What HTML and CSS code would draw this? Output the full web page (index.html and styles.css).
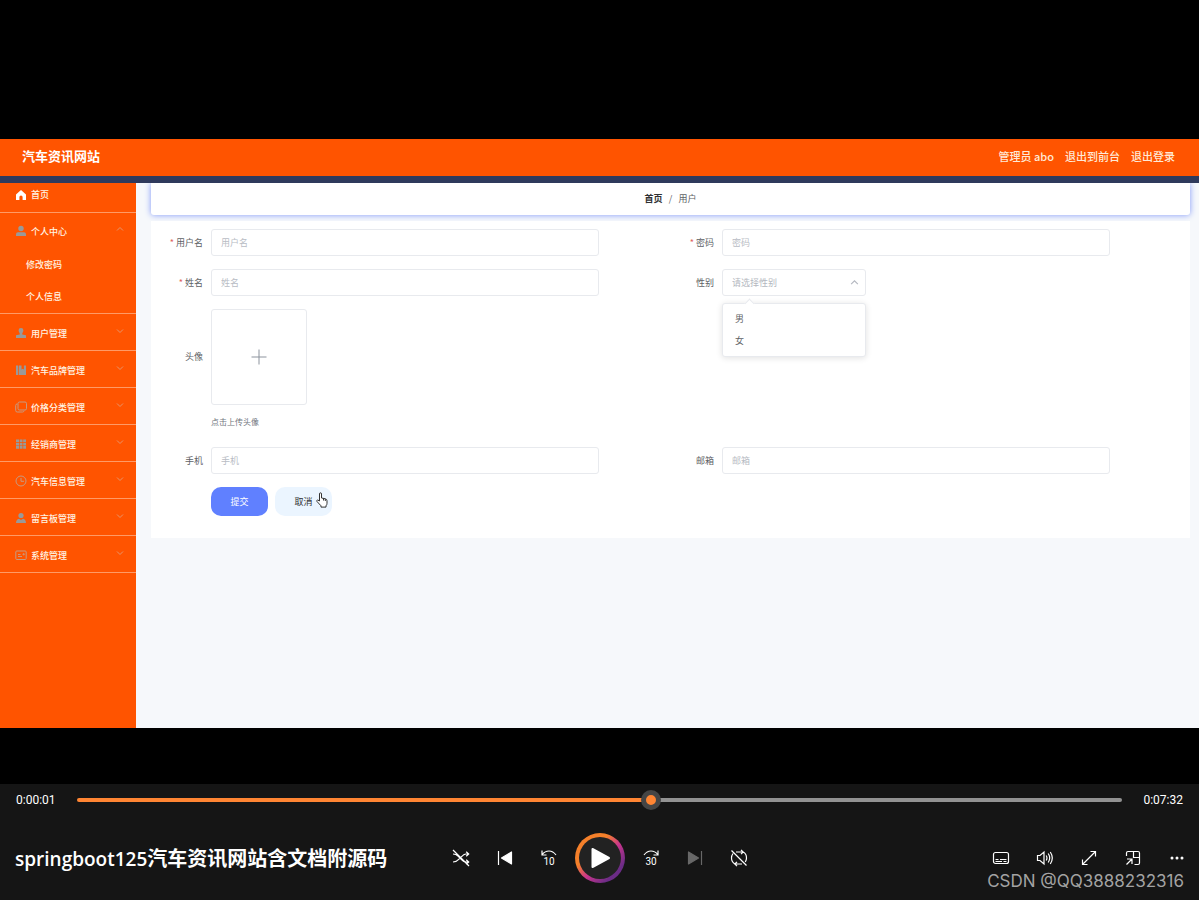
FILE: index.html
```html
<!DOCTYPE html>
<html lang="zh-CN">
<head>
<meta charset="utf-8">
<meta name="viewport" content="width=device-width, initial-scale=1">
<title>springboot125汽车资讯网站含文档附源码</title>
<link rel="stylesheet" href="styles.css">
</head>
<body>
<div class="stage">
  <div class="app">
    <header class="app-header">
      <h1 class="app-title">汽车资讯网站</h1>
      <nav class="app-user">
        <span>管理员 abo</span>
        <a href="#front">退出到前台</a>
        <a href="#logout">退出登录</a>
      </nav>
    </header>
    <div class="app-body">
      <nav class="sidebar">
        <a class="menu-item menu-home" href="#home">
          <svg class="menu-icon" viewBox="0 0 12 12"><path fill="#fff" d="M6 1 1 5.600V11h3.400V8a1.600 1.600 0 0 1 3.200 0v3H11V5.600z"/></svg>
          <span>首页</span>
        </a>
        <div class="menu-group">
          <a class="menu-item menu-open" href="#me">
            <svg class="menu-icon" viewBox="0 0 12 12"><circle cx="6" cy="3.500" r="2.700" fill="#999"/><path fill="#999" d="M1 11V9.200Q1 7.200 3 7.200h6q2 0 2 2V11z"/></svg>
            <span>个人中心</span>
            <svg class="menu-arrow" viewBox="0 0 8 8"><path d="M1 5.500 4 2.500l3 3"/></svg>
          </a>
          <a class="menu-sub" href="#password">修改密码</a>
          <a class="menu-sub" href="#profile">个人信息</a>
        </div>
        <a class="menu-item" href="#users">
          <svg class="menu-icon" viewBox="0 0 12 12"><path fill="#999" d="M6 1q2.400 0 2.400 2.300 0 1.700-1.100 2.900v1.200l3.700.9V11H1V8.300l3.700-.9V6.200Q3.600 5 3.600 3.300 3.600 1 6 1z"/></svg>
          <span>用户管理</span>
          <svg class="menu-arrow" viewBox="0 0 8 8"><path d="M1 2.500l3 3 3-3"/></svg>
        </a>
        <a class="menu-item" href="#brands">
          <svg class="menu-icon" viewBox="0 0 12 12"><path fill="#999" d="M1 1.500h2v9.500H1zM3.700 1.500h2.800v4l1.200-.8 1.200.8v-4H11V11H3.700z"/></svg>
          <span>汽车品牌管理</span>
          <svg class="menu-arrow" viewBox="0 0 8 8"><path d="M1 2.500l3 3 3-3"/></svg>
        </a>
        <a class="menu-item" href="#prices">
          <svg class="menu-icon menu-line" viewBox="0 0 12 12"><rect x="3" y="1" width="8.500" height="8" rx="1.500"/><path d="M2.500 3H2Q.7 3 .7 4.500V9.500Q.7 11 2.200 11H7.500Q9 11 9 9.700"/></svg>
          <span>价格分类管理</span>
          <svg class="menu-arrow" viewBox="0 0 8 8"><path d="M1 2.500l3 3 3-3"/></svg>
        </a>
        <a class="menu-item" href="#dealers">
          <svg class="menu-icon" viewBox="0 0 12 12"><path fill="#999" d="M1 1.500h3v2.600H1zM4.700 1.500h2.800v2.600H4.700zM8.200 1.500H11v2.600H8.200zM1 4.800h3v2.600H1zM4.700 4.800h2.800v2.600H4.700zM8.200 4.800H11v2.600H8.200zM1 8.100h3v2.600H1zM4.700 8.100h2.800v2.600H4.700zM8.200 8.100H11v2.600H8.200z"/></svg>
          <span>经销商管理</span>
          <svg class="menu-arrow" viewBox="0 0 8 8"><path d="M1 2.500l3 3 3-3"/></svg>
        </a>
        <a class="menu-item" href="#cars">
          <svg class="menu-icon menu-line" viewBox="0 0 12 12"><circle cx="6" cy="6" r="5"/><path d="M6 3v3.300h3"/></svg>
          <span>汽车信息管理</span>
          <svg class="menu-arrow" viewBox="0 0 8 8"><path d="M1 2.500l3 3 3-3"/></svg>
        </a>
        <a class="menu-item" href="#messages">
          <svg class="menu-icon" viewBox="0 0 12 12"><circle cx="6" cy="3.500" r="2.600" fill="#999"/><path fill="#999" d="M1 11Q1 7.500 4 6.800L6 8l2-1.200Q11 7.500 11 11z"/></svg>
          <span>留言板管理</span>
          <svg class="menu-arrow" viewBox="0 0 8 8"><path d="M1 2.500l3 3 3-3"/></svg>
        </a>
        <a class="menu-item" href="#system">
          <svg class="menu-icon menu-line" viewBox="0 0 12 12"><rect x=".8" y="2" width="10.400" height="8.500" rx="1"/><path d="M3 5.500h2.500M3 7.500h4M8 4.800h1.200v1H8z"/></svg>
          <span>系统管理</span>
          <svg class="menu-arrow" viewBox="0 0 8 8"><path d="M1 2.500l3 3 3-3"/></svg>
        </a>
      </nav>
      <main class="content">
        <div class="breadcrumb">
          <a class="crumb-home" href="#home">首页</a><span class="crumb-sep">/</span><span>用户</span>
        </div>
        <form class="form-card">
          <div class="field">
            <label class="required" for="username">用户名</label>
            <input class="text-box" id="username" type="text" placeholder="用户名">
          </div>
          <div class="field">
            <label class="required" for="password">密码</label>
            <input class="text-box" id="password" type="password" placeholder="密码">
          </div>
          <div class="field">
            <label class="required" for="fullname">姓名</label>
            <input class="text-box" id="fullname" type="text" placeholder="姓名">
          </div>
          <div class="field">
            <label for="gender">性别</label>
            <div class="select-wrap">
              <select class="text-box" id="gender">
                <option>请选择性别</option>
                <option>男</option>
                <option>女</option>
              </select>
              <svg class="select-arrow" viewBox="0 0 8 8"><path d="M1 5.500 4 2.500l3 3"/></svg>
              <ul class="select-menu">
                <li>男</li>
                <li>女</li>
              </ul>
            </div>
          </div>
          <div class="field field-wide">
            <label class="upload-label" for="avatar">头像</label>
            <div class="upload">
              <button class="upload-box" id="avatar" type="button" aria-label="上传头像">
                <svg class="upload-plus" viewBox="0 0 16 16"><path d="M8 .5v15M.5 8h15"/></svg>
              </button>
              <p class="upload-tip">点击上传头像</p>
            </div>
          </div>
          <div class="field">
            <label for="phone">手机</label>
            <input class="text-box" id="phone" type="tel" placeholder="手机">
          </div>
          <div class="field">
            <label for="email">邮箱</label>
            <input class="text-box" id="email" type="email" placeholder="邮箱">
          </div>
          <div class="actions">
            <button class="btn btn-submit" type="button">提交</button>
            <button class="btn btn-cancel" type="button">取消
              <svg class="pointer" viewBox="0 0 12 16"><path d="M3.500 9V2q0-1.200 1-1.200t1 1.200v4l4 .8q1.500.4 1.500 2v2.500q0 1.500-1 2.500v1.300H5v-1.300L1 9.500q-.4-1.200.5-1.600z"/><path d="M7.500 6.500v2M9.300 7v2"/></svg>
            </button>
          </div>
        </form>
      </main>
    </div>
  </div>
</div>
<footer class="player">
  <div class="seek">
    <span class="time">0:00:01</span>
    <input class="seek-bar" type="range" min="0" max="100" value="55" aria-label="播放进度">
    <span class="time time-end">0:07:32</span>
  </div>
  <div class="controls">
    <div class="media-title"><span class="media-latin">springboot125</span>汽车资讯网站含文档附源码</div>
    <div class="transport">
      <button class="ctl" type="button" aria-label="随机播放"><svg viewBox="0 0 18 18"><path d="M1 5q3 0 5 2.200L8.500 9.500q3 3.500 5.500 3.500h2.500M1 13q3.500 0 6-2.800l2-2Q12 5 14 5h2.500M14.200 2.700 16.700 5l-2.500 2.300M14.200 10.700l2.500 2.300-2.500 2.300M1 1l16 16"/></svg></button>
      <button class="ctl" type="button" aria-label="上一个"><svg viewBox="0 0 18 18"><path d="M2.500 2v14"/><path class="solid" d="M15.500 3v12L5.500 9z"/></svg></button>
      <button class="ctl" type="button" aria-label="后退10秒"><svg viewBox="0 0 18 18"><path d="M2 1.500v4.500h4.500M2.300 5.500Q5 2 9 2t7 4"/><text x="9" y="16">10</text></svg></button>
      <button class="play" type="button" aria-label="播放"><svg viewBox="0 0 24 24"><path d="M4.500 3v18L21 12z"/></svg></button>
      <button class="ctl" type="button" aria-label="前进30秒"><svg viewBox="0 0 18 18"><path d="M16 1.500v4.500h-4.500M15.700 5.500Q13 2 9 2T2 6"/><text x="9" y="16">30</text></svg></button>
      <button class="ctl ctl-off" type="button" aria-label="下一个"><svg viewBox="0 0 18 18"><path d="M15.500 2v14"/><path class="solid" d="M2.500 3v12l10-6z"/></svg></button>
      <button class="ctl" type="button" aria-label="重复播放"><svg viewBox="0 0 18 18"><path d="M6 3h7q3.500 1.500 3.500 6 0 2-1.200 4M12 15H5Q1.500 13 1.500 9q0-2.500 1.500-4.500M11 .8 13.200 3 11 5.200M7 12.800 4.800 15 7 17.200M1.500 1.500l15 15"/></svg></button>
    </div>
    <div class="tools">
      <button class="ctl" type="button" aria-label="字幕"><svg viewBox="0 0 18 18"><rect x="1.500" y="3.500" width="15" height="11" rx="2"/><path d="M3.500 10.500h3M8 10.500h6.500M3.500 12.500h6.500M11.500 12.500h3"/></svg></button>
      <button class="ctl" type="button" aria-label="音量"><svg viewBox="0 0 18 18"><path d="M1.500 6.500v5H4l4 3.500V3L4 6.500zM10.200 6.500q1.500 2.500 0 5M12.200 4.500q3 4.500 0 9M14.300 3q4 6 0 12"/></svg></button>
      <button class="ctl" type="button" aria-label="全屏"><svg viewBox="0 0 18 18"><path d="M2.500 15.500l13-13M10.500 2.500h5v5M2.500 10.500v5h5"/></svg></button>
      <button class="ctl" type="button" aria-label="小窗播放"><svg viewBox="0 0 18 18"><path d="M2.500 7V4q0-1.500 1.500-1.500h10q1.500 0 1.500 1.500v10q0 1.500-1.500 1.500h-3.500M9.500 2.500v6h6M2.500 15.500l5.500-5.500M3 10h5v5"/></svg></button>
      <button class="ctl" type="button" aria-label="更多"><svg viewBox="0 0 18 18"><circle class="solid" cx="4" cy="9" r=".9"/><circle class="solid" cx="9" cy="9" r=".9"/><circle class="solid" cx="14" cy="9" r=".9"/></svg></button>
    </div>
  </div>
  <div class="watermark">CSDN @QQ3888232316</div>
</footer>
</body>
</html>
```
FILE: styles.css
```css
* { box-sizing: border-box; }

body {
  margin: 0;
  min-height: 100vh;
  display: flex;
  flex-direction: column;
  background: #000;
  color: #606266;
  font: 9px/12px "Noto Sans CJK SC", sans-serif;
}

a { color: inherit; text-decoration: none; }
button, input, select { font: inherit; }
button { padding: 0; border: 0; cursor: pointer; }

.stage {
  flex: 1;
  display: flex;
  padding: 139px 0 56px;
}

.app { flex: 1; display: flex; flex-direction: column; }

.app-header {
  display: flex;
  align-items: center;
  justify-content: space-between;
  height: 44px;
  padding: 0 24px 3px 22px;
  border-bottom: 7px solid #2f3a5c;
  background: #ff5400;
  color: #fff;
}

.app-title { margin: 0; font-size: 13px; line-height: 20px; font-weight: 700; }

.app-user {
  display: flex;
  gap: 11px;
  color: #ffe9d6;
  font-size: 11px;
  font-weight: 500;
}

.app-body { flex: 1; display: flex; }

.sidebar {
  width: 136px;
  background: #ff5400;
  color: #fff4e4;
  font-weight: 500;
}

.menu-item {
  display: flex;
  align-items: center;
  gap: 4px;
  height: 37px;
  padding: 3px 12px 0 15px;
  border-bottom: 1px solid #ff9a66;
}

.menu-home { height: 30px; padding: 0 12px 5px 15px; }
.menu-group { border-bottom: 1px solid #ff9a66; }
.menu-open { height: 36px; padding-top: 1px; border-bottom: 0; }
.menu-sub { display: block; padding-left: 26px; line-height: 32px; }

.menu-icon { width: 12px; height: 12px; margin-bottom: 1px; }
.menu-line { fill: none; stroke: #c79a80; stroke-width: 1; }

.menu-arrow {
  width: 8px;
  height: 8px;
  margin: 0 0 5px auto;
  fill: none;
  stroke: #e8946a;
  stroke-width: 1;
}

.content {
  flex: 1;
  overflow: hidden;
  padding: 0 9px 0 15px;
  background: #f6f8fb;
}

.breadcrumb {
  display: flex;
  align-items: center;
  justify-content: center;
  gap: 6px;
  height: 32px;
  margin-bottom: 6px;
  border-radius: 0 0 3px 3px;
  background: #fff;
  box-shadow: 0 0 6px #7f97f8;
}

.crumb-home { color: #303133; font-weight: 700; }
.crumb-sep { width: 4px; text-align: center; }

.form-card {
  display: grid;
  grid-template-columns: 1fr 1fr;
  row-gap: 13px;
  padding: 8px 9px 22px 8px;
  background: #fff;
}

.field {
  display: grid;
  grid-template-columns: 52px 1fr;
  align-items: center;
  padding-right: 71px;
}

.field-wide { grid-column: 1 / -1; align-items: start; }
.field label { padding-right: 8px; text-align: right; white-space: nowrap; }
.required::before { content: "* "; color: #e0645c; }

.text-box {
  width: 100%;
  height: 27px;
  padding: 0 9px;
  border: 1px solid #e8eaee;
  border-radius: 3px;
  background: #fff;
  color: #b4b8c0;
  outline: 0;
}

.text-box::placeholder { color: #b8bcc4; }

.select-wrap { position: relative; width: 144px; }
select.text-box { display: block; appearance: none; }

.select-arrow {
  position: absolute;
  top: 9px;
  right: 7px;
  width: 9px;
  height: 9px;
  fill: none;
  stroke: #b4b8c0;
  stroke-width: 1;
}

.select-menu {
  position: absolute;
  top: 34px;
  left: 0;
  width: 100%;
  margin: 0;
  padding: 4px 0;
  border: 1px solid #e8eaee;
  border-radius: 3px;
  background: #fff;
  box-shadow: 0 1px 6px rgba(0, 0, 0, 0.12);
  list-style: none;
}

.select-menu::before {
  content: "";
  position: absolute;
  top: -4px;
  left: 23px;
  width: 6px;
  height: 6px;
  border: solid #e8eaee;
  border-width: 1px 0 0 1px;
  background: #fff;
  transform: rotate(45deg);
}

.select-menu li { padding-left: 12px; line-height: 22px; }

.upload-label { line-height: 96px; }

.upload-box {
  display: grid;
  place-items: center;
  width: 96px;
  height: 96px;
  border: 1px solid #e8eaee;
  border-radius: 3px;
  background: #fff;
}

.upload-plus { width: 16px; height: 16px; stroke: #8c939d; stroke-width: 1; }
.upload-tip { margin: 0; padding: 11px 0 6px; font-size: 8px; color: #70757d; }

.actions {
  grid-column: 1 / -1;
  display: flex;
  gap: 7px;
  padding-left: 52px;
}

.btn { width: 57px; height: 29px; border-radius: 10px; }
.btn-submit { background: #6080ff; color: #fff; }
.btn-cancel { position: relative; background: #ebf5ff; color: #303133; }

.pointer {
  position: absolute;
  top: 5px;
  right: 4px;
  width: 12px;
  height: 16px;
  fill: #fff;
  stroke: #333;
  stroke-width: 1;
}

.player {
  position: relative;
  background: #151515;
  color: #fff;
}

.seek {
  display: grid;
  grid-template-columns: 61px 1fr 61px;
  align-items: center;
  height: 32px;
  padding: 0 16px;
}

.time { font: 12px/16px Roboto, sans-serif; }
.time-end { text-align: right; }

.seek-bar {
  width: 100%;
  height: 20px;
  margin: 0;
  appearance: none;
  background: none;
}

.seek-bar::-webkit-slider-runnable-track {
  height: 4px;
  border-radius: 2px;
  background: linear-gradient(to right, #ff8533 55%, #929292 55%);
}

.seek-bar::-webkit-slider-thumb {
  appearance: none;
  width: 20px;
  height: 20px;
  margin-top: -8px;
  border: 5px solid #454545;
  border-radius: 50%;
  background: #ff8533;
}

.controls {
  display: grid;
  grid-template-columns: 1fr auto 1fr;
  align-items: center;
  height: 84px;
}

.media-title {
  padding-left: 15px;
  font-size: 20px;
  line-height: 28px;
  font-weight: 700;
  white-space: nowrap;
}

.media-latin { font-family: "Open Sans", sans-serif; font-size: 19px; font-weight: 600; }

.transport, .tools { display: flex; align-items: center; }
.tools { justify-content: flex-end; }

.ctl {
  display: grid;
  place-items: center;
  width: 44px;
  height: 44px;
  background: none;
  color: #fff;
}

.ctl svg { width: 18px; height: 18px; fill: none; stroke: currentColor; stroke-width: 1.200; }
.ctl .solid { fill: currentColor; stroke-linejoin: round; }
.ctl text { fill: currentColor; stroke: none; font: 10px Roboto, sans-serif; text-anchor: middle; }
.ctl-off { color: #686868; }

.play {
  display: grid;
  place-items: center;
  width: 50px;
  height: 50px;
  margin: 0 4px;
  border: 4px solid transparent;
  border-radius: 50%;
  background:
    linear-gradient(#222, #222) padding-box,
    linear-gradient(135deg, #f5802a 35%, #c9358c 55%, #6b2c86 80%) border-box;
}

.play svg { width: 24px; height: 24px; fill: #fff; stroke: #fff; stroke-width: 2; stroke-linejoin: round; }

.watermark {
  position: absolute;
  right: 15px;
  bottom: 8px;
  color: #a3a3a3;
  font: 400 17px/22px Inter, sans-serif;
}
```
